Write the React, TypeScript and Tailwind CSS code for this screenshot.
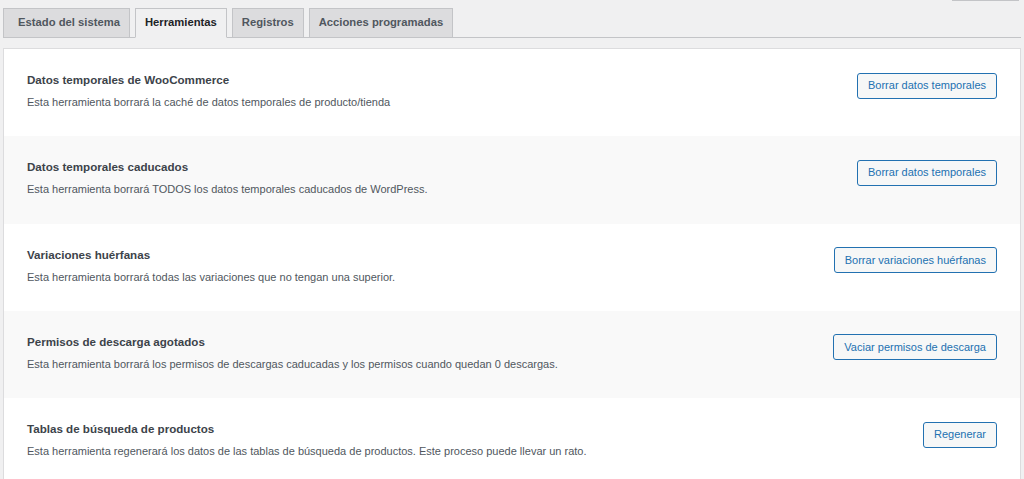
import React from "react";

const rows = [
  {
    title: "Datos temporales de WooCommerce",
    desc: "Esta herramienta borrará la caché de datos temporales de producto/tienda",
    btn: "Borrar datos temporales",
  },
  {
    title: "Datos temporales caducados",
    desc: "Esta herramienta borrará TODOS los datos temporales caducados de WordPress.",
    btn: "Borrar datos temporales",
  },
  {
    title: "Variaciones huérfanas",
    desc: "Esta herramienta borrará todas las variaciones que no tengan una superior.",
    btn: "Borrar variaciones huérfanas",
  },
  {
    title: "Permisos de descarga agotados",
    desc: "Esta herramienta borrará los permisos de descargas caducadas y los permisos cuando quedan 0 descargas.",
    btn: "Vaciar permisos de descarga",
  },
  {
    title: "Tablas de búsqueda de productos",
    desc: "Esta herramienta regenerará los datos de las tablas de búsqueda de productos. Este proceso puede llevar un rato.",
    btn: "Regenerar",
  },
];

const tabs = [
  { label: "Estado del sistema", active: false, first: true },
  { label: "Herramientas", active: true },
  { label: "Registros", active: false },
  { label: "Acciones programadas", active: false },
];

export default function App() {
  return (
    <div
      className="w-[1024px] h-[479px] overflow-hidden bg-[#f0f0f1] px-[3px]"
      style={{ fontFamily: '"Liberation Sans", Arial, sans-serif' }}
    >
      <div className="relative h-[8px]">
        <div className="absolute left-[949px] top-0 w-[67px] h-[1px] bg-[#c3c4c7]" />
      </div>
      <div className="flex gap-[5px] border-b border-[#c3c4c7] h-[30px] items-end">
        {tabs.map((t) => (
          <div
            key={t.label}
            className={
              "h-[30px] border border-[#c3c4c7] flex items-center text-[11.25px] font-bold leading-none -mb-px " +
              (t.active
                ? "bg-[#f0f0f1] border-b-[#f0f0f1] text-[#1d2327] px-[9px]"
                : "bg-[#dcdcde] text-[#50575e] px-[9px]") +
              (t.first ? " pl-[14px]" : "")
            }
          >
            {t.label}
          </div>
        ))}
      </div>
      <div className="mt-[10px] bg-white border border-[#dcdcde] w-[1018px]">
        {rows.map((r, i) => (
          <div
            key={i}
            className={
              "h-[87.25px] flex justify-between pl-[23px] pr-[23px] " +
              (i % 2 === 1 ? "bg-[#f9f9f9]" : "bg-white")
            }
          >
            <div className="pt-[23px]">
              <div className="text-[11.6px] font-bold leading-[16px] text-[#3c434a]">
                {r.title}
              </div>
              <div className="mt-[5px] text-[11px] leading-[18px] text-[#50575e]">
                {r.desc}
              </div>
            </div>
            <div className="pt-[23px]">
              <button className="h-[26px] px-[10px] border border-[#2271b1] rounded-[3px] bg-[#f6f7f7] text-[#2271b1] text-[11px] leading-none whitespace-nowrap">
                {r.btn}
              </button>
            </div>
          </div>
        ))}
      </div>
    </div>
  );
}
